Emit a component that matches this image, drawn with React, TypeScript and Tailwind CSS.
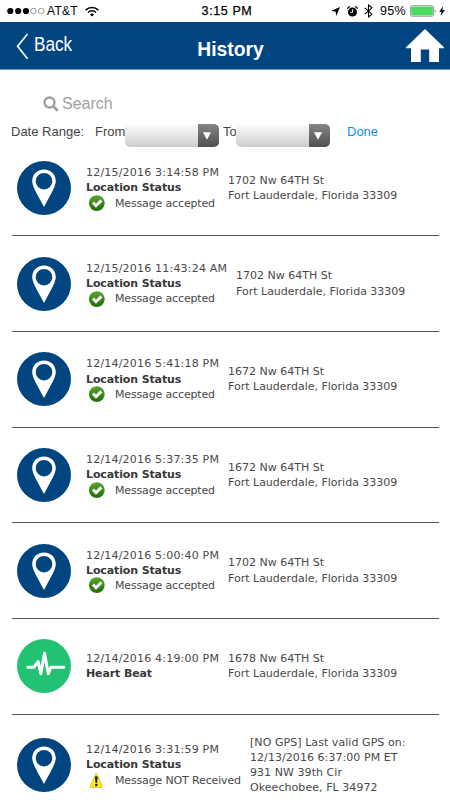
import type { ReactNode } from "react";

type EventType = "location" | "heartbeat";
type MessageStatus = "accepted" | "failed";

type HistoryItem = {
  type: EventType;
  date: string;
  title: string;
  status?: MessageStatus;
  message?: string;
  address: string[];
  addressClass: string;
};

const HISTORY: HistoryItem[] = [
  {
    type: "location",
    date: "12/15/2016 3:14:58 PM",
    title: "Location Status",
    status: "accepted",
    message: "Message accepted",
    address: ["1702 Nw 64TH St", "Fort Lauderdale, Florida 33309"],
    addressClass: "w-[211px]",
  },
  {
    type: "location",
    date: "12/15/2016 11:43:24 AM",
    title: "Location Status",
    status: "accepted",
    message: "Message accepted",
    address: ["1702 Nw 64TH St", "Fort Lauderdale, Florida 33309"],
    addressClass: "w-[203px]",
  },
  {
    type: "location",
    date: "12/14/2016 5:41:18 PM",
    title: "Location Status",
    status: "accepted",
    message: "Message accepted",
    address: ["1672 Nw 64TH St", "Fort Lauderdale, Florida 33309"],
    addressClass: "w-[211px]",
  },
  {
    type: "location",
    date: "12/14/2016 5:37:35 PM",
    title: "Location Status",
    status: "accepted",
    message: "Message accepted",
    address: ["1672 Nw 64TH St", "Fort Lauderdale, Florida 33309"],
    addressClass: "w-[211px]",
  },
  {
    type: "location",
    date: "12/14/2016 5:00:40 PM",
    title: "Location Status",
    status: "accepted",
    message: "Message accepted",
    address: ["1702 Nw 64TH St", "Fort Lauderdale, Florida 33309"],
    addressClass: "w-[211px]",
  },
  {
    type: "heartbeat",
    date: "12/14/2016 4:19:00 PM",
    title: "Heart Beat",
    address: ["1678 Nw 64TH St", "Fort Lauderdale, Florida 33309"],
    addressClass: "w-[211px]",
  },
  {
    type: "location",
    date: "12/14/2016 3:31:59 PM",
    title: "Location Status",
    status: "failed",
    message: "Message NOT Received",
    address: [
      "[NO GPS] Last valid GPS on:",
      "12/13/2016 6:37:00 PM ET",
      "931 NW 39th Cir",
      "Okeechobee, FL 34972",
    ],
    addressClass: "w-[189px] tracking-[0.06px]",
  },
];

const StatusBar = () => (
  <div className="grid h-[22px] grid-cols-[1fr_auto_1fr] items-center pl-[7px] pr-[5px] text-black">
    <div className="flex items-center">
      <svg width="38" height="8" viewBox="0 0 38 8">
        {[3.3, 11.2, 19].map((cx) => (
          <circle key={cx} cx={cx} cy="4" r="3.1" fill="#000" />
        ))}
        {[26.5, 34.2].map((cx) => (
          <circle key={cx} cx={cx} cy="4" r="2.8" fill="none" stroke="#555" strokeWidth=".6" />
        ))}
      </svg>
      <span className="ml-[2px] w-[32px] whitespace-nowrap text-[12px] leading-[22px] tracking-[0.3px]">AT&amp;T</span>
      <svg className="ml-[6px]" width="14" height="11" viewBox="0 0 14 11" fill="none" stroke="#000" strokeWidth="1.6">
        <path d="M.7 4.1a8.8 8.8 0 0 1 12.6 0" />
        <path d="M3 6.5a5.6 5.6 0 0 1 8 0" />
        <path d="M7 10.6 4.9 8.5a3 3 0 0 1 4.2 0z" fill="#000" stroke="none" />
      </svg>
    </div>
    <span className="pl-[2px] text-[12.5px] font-medium leading-[22px] tracking-[0.6px] [-webkit-text-stroke:0.25px_#000]">
      3:15 PM
    </span>
    <div className="flex items-center justify-end">
      <svg width="9" height="9" viewBox="0 0 9 9">
        <path d="M9 0 5.2 9 4.6 4.5 0 4z" fill="#000" />
      </svg>
      <svg className="ml-[7px]" width="11" height="11" viewBox="0 0 11 11">
        <circle cx="5.5" cy="6" r="4.5" fill="#000" />
        <path d="M.4 2.9A3 3 0 0 1 3 .6M10.6 2.9A3 3 0 0 0 8 .6" stroke="#000" strokeWidth="1.2" fill="none" />
        <path d="M5.6 3.3v3H3.4" stroke="#fff" strokeWidth="1" fill="none" />
      </svg>
      <svg className="ml-[6px]" width="9" height="14" viewBox="0 0 9 14">
        <path d="M.8 3.8 8 10.2 4.5 13V1L8 3.8.8 10.2" stroke="#000" strokeWidth="1.1" fill="none" />
      </svg>
      <span className="ml-[7px] w-[28px] whitespace-nowrap text-[12.5px] leading-[22px] tracking-[0.3px]">95%</span>
      <svg className="ml-[2px]" width="27" height="12" viewBox="0 0 27 12">
        <rect x=".5" y=".7" width="23" height="10.6" rx="1.6" fill="#fff" stroke="#777" strokeWidth=".7" />
        <rect x="1.2" y="1.4" width="21.6" height="9.2" rx="1" fill="#4cd964" />
        <path d="M24.8 4.2q1.6 1.8 0 3.6z" fill="#333" />
      </svg>
      <svg className="ml-[2px]" width="6" height="10" viewBox="0 0 6 10">
        <path d="M4.2 0 .2 5.7h2.3L1.7 10l4-5.9H3.3z" fill="#000" />
      </svg>
    </div>
  </div>
);

const Header = () => (
  <header className="grid h-[47.5px] grid-cols-[1fr_auto_1fr] border-b border-[#7799b8] bg-[#00457f] text-white">
    <button type="button" className="flex items-start pl-[16px] pt-[10px]">
      <svg className="mt-[1px]" width="13" height="27" viewBox="0 0 13 27" fill="none" stroke="#fff" strokeWidth="1.7">
        <path d="M11.5 1 1.6 13.2 11.5 25.8" />
      </svg>
      <span className="ml-[5px] origin-left scale-x-[0.88] text-[19.5px] leading-[24px]">Back</span>
    </button>
    <h1 className="pl-[11px] pt-[16px] text-[19.3px] font-bold leading-[24px]">History</h1>
    <div className="flex justify-end pr-[6px] pt-[7px]">
      <svg width="38" height="34" viewBox="0 0 38 34">
        <path d="M19 0 38 18.2v1H33V33H23.2V20.5h-8.4V33H5V19.2H0v-1z" fill="#fff" />
      </svg>
    </div>
  </header>
);

const DateSelect = () => (
  <button
    type="button"
    className="flex h-[22.5px] w-[94px] overflow-hidden rounded-[5px] bg-gradient-to-b from-[#fdfdfd] to-[#cdcdcd]"
  >
    <span className="ml-auto flex h-full w-[21.5px] items-center justify-center bg-gradient-to-b from-[#858585] to-[#515151] pr-[2px] pt-[1px]">
      <svg width="8" height="8" viewBox="0 0 8 8">
        <path d="M0 .3h8L4 7.8z" fill="#fff" />
      </svg>
    </span>
  </button>
);

const Filters = () => (
  <section className="h-[71.3px] pt-[24px] text-[#444]">
    <div className="flex h-[20px] items-center pl-[43px] text-[#a0a0a0]">
      <svg width="16" height="16" viewBox="0 0 16 16" fill="none" stroke="#a0a0a0" strokeWidth="2.4">
        <circle cx="6.5" cy="6.5" r="5" />
        <path d="m10.2 10.2 4.6 4.6" strokeWidth="2.8" />
      </svg>
      <span className="ml-[3px] text-[16px]">Search</span>
    </div>
    <div className="flex h-[32px] items-start pl-[11px] pt-[8px] text-[13px] leading-[20px]">
      <span className="w-[84px] whitespace-nowrap">Date Range:</span>
      <span className="w-[30px]">From</span>
      <span className="mt-[2.5px]">
        <DateSelect />
      </span>
      <span className="ml-[4px] w-[13px]">To</span>
      <span className="mt-[2.5px]">
        <DateSelect />
      </span>
      <button type="button" className="ml-[17px] text-[#0a8cff]">
        Done
      </button>
    </div>
  </section>
);

const PinIcon = () => (
  <svg className="shrink-0" width="54" height="54" viewBox="0 0 54 54">
    <circle cx="27" cy="27" r="27" fill="#00457f" />
    <path
      fillRule="evenodd"
      d="M27 8.6c-7 0-11.8 5-11.8 11.5 0 4.6 3.8 11.4 11.8 25.8 8-14.4 11.8-21.2 11.8-25.8C38.8 13.600 34 8.600 27 8.600zm0 3.300a8.300 8.300 0 1 0 0 16.600 8.300 8.300 0 0 0 0-16.600z"
      fill="#fff"
    />
  </svg>
);

const HeartBeatIcon = () => (
  <svg className="shrink-0" width="54" height="54" viewBox="0 0 54 54">
    <circle cx="27" cy="27" r="27" fill="#23c273" />
    <path
      d="M10.8 28.3h6l2-2.5 2.3-3.3 2.8 12.2 3.6-20.4 3.8 20.4 2.6-6.4h13"
      fill="none"
      stroke="#fff"
      strokeWidth="3"
      strokeLinecap="round"
      strokeLinejoin="round"
    />
  </svg>
);

const AcceptedIcon = () => (
  <svg width="17" height="17" viewBox="0 0 17 17">
    <defs>
      <linearGradient id="accepted" x1="0" y1="0" x2="0" y2="1">
        <stop offset="0" stopColor="#55a82c" />
        <stop offset="1" stopColor="#236c08" />
      </linearGradient>
    </defs>
    <circle cx="8.8" cy="8.1" r="7.9" fill="url(#accepted)" />
    <path d="m5 7.5 3 3.2 5.4-5.3" fill="none" stroke="#fff" strokeWidth="3" />
  </svg>
);

const WarningIcon = () => (
  <svg width="17" height="17" viewBox="0 0 17 17">
    <path d="M8.3.8 14.3 14a1.2 1.2 0 0 1-1 1.5H3.1A1.2 1.2 0 0 1 2 14z" fill="#ffe71a" stroke="#c9ae14" strokeWidth=".6" />
    <path d="M6.8 4.7q1.5-1 3 0L9 11H7.6z" fill="#222" />
    <circle cx="8.3" cy="13" r="1.3" fill="#222" />
  </svg>
);

const EVENT_ICONS: Record<EventType, ReactNode> = {
  location: <PinIcon />,
  heartbeat: <HeartBeatIcon />,
};

const STATUS_ICONS: Record<MessageStatus, ReactNode> = {
  accepted: <AcceptedIcon />,
  failed: <WarningIcon />,
};

const HistoryRow = ({ item }: { item: HistoryItem }) => (
  <li className="flex h-[95.65px] items-center border-b border-[#555] pl-[5px] last:h-[102px]">
    {EVENT_ICONS[item.type]}
    <div className="ml-[15px] whitespace-nowrap">
      <p className="tracking-[0.2px]">{item.date}</p>
      <p className="font-bold tracking-[-0.12px] text-[#383838]">{item.title}</p>
      {item.status && (
        <div className="flex h-[15.3px] items-center">
          <span className="ml-[2px]">{STATUS_ICONS[item.status]}</span>
          <span className="ml-[10px] tracking-[-0.15px]">{item.message}</span>
        </div>
      )}
    </div>
    <div className={`ml-auto whitespace-nowrap ${item.addressClass}`}>
      {item.address.map((line) => (
        <p key={line}>{line}</p>
      ))}
    </div>
  </li>
);

const App = () => {
  return (
    <main className="h-[800px] w-[450px] overflow-hidden bg-white font-['Liberation_Sans',Arial,sans-serif]">
      <StatusBar />
      <Header />
      <Filters />
      <ul className="ml-[12px] w-[427px] font-['DejaVu_Sans',Verdana,sans-serif] text-[11px] leading-[15.3px] text-[#484848]">
        {HISTORY.map((item) => (
          <HistoryRow key={item.date} item={item} />
        ))}
      </ul>
    </main>
  );
};

export default App;
